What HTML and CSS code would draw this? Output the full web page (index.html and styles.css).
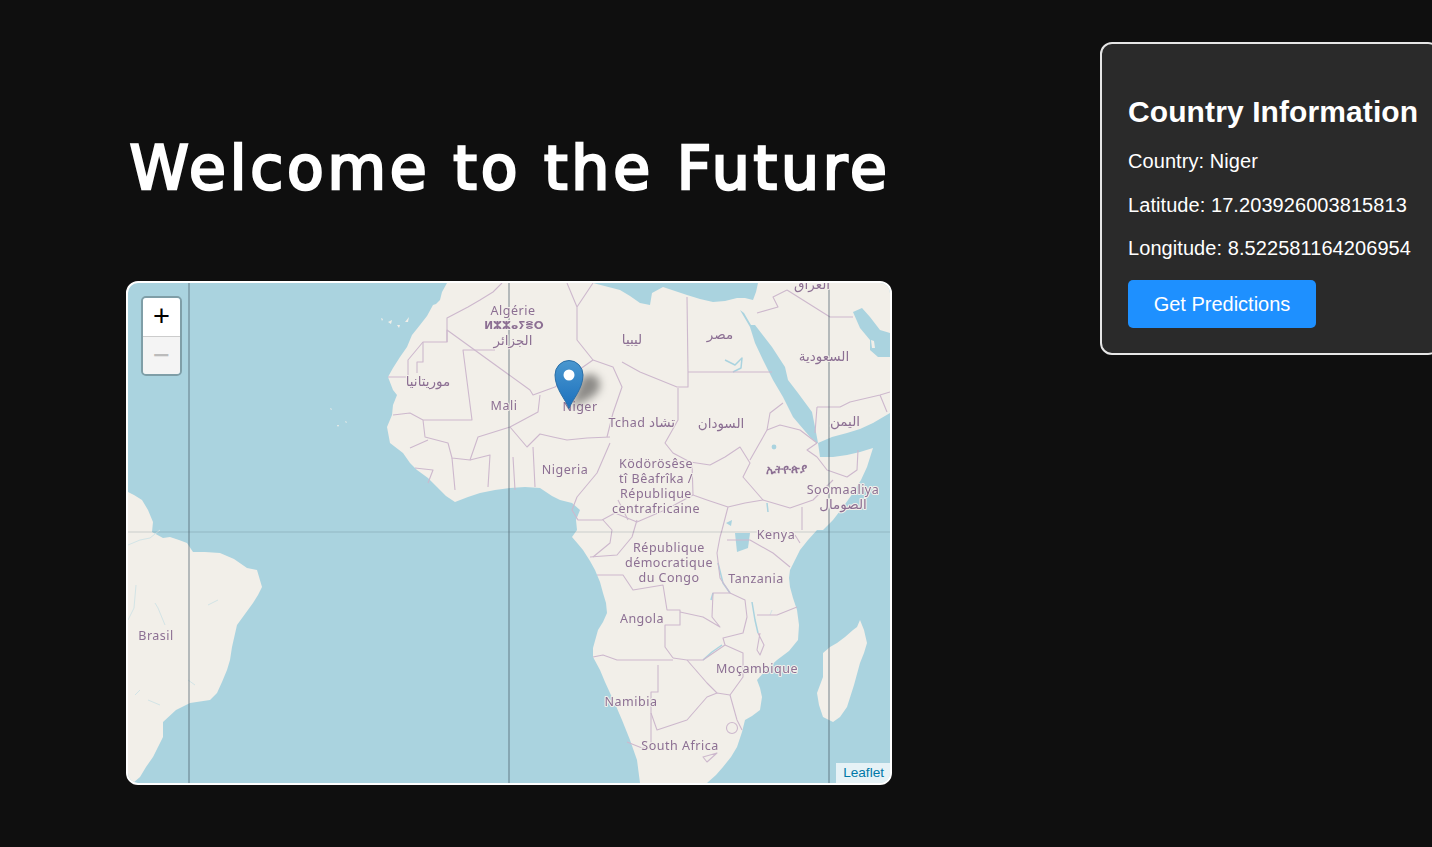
FILE: index.html
```html
<!DOCTYPE html>
<html lang="en">
<head>
<meta charset="utf-8">
<title>Welcome to the Future</title>
<link rel="stylesheet" href="styles.css">
</head>
<body>
<main class="page">
  <section class="left">
    <h1 class="title">Welcome to the Future</h1>
    <div class="map">
      <svg class="tiles" viewBox="128 283 762 500" width="762" height="500">
        <g class="land">
          <path d="M447,283 442,292 440,300 436,304 433,305 427,316 420,325 412,335 407,347 400,357 393,368 388,377 393,390 397,395 393,405 392,415 387,427 390,443 403,453 410,463 417,470 428,478 437,487 446,496 455,502 468,497 480,493 495,490 510,488 525,487 540,488 552,496 560,500 572,503 580,510 576,520 577,530 572,537 578,544 583,550 590,561 595,570 600,582 603,593 606,603 607,613 603,622 598,630 593,648 593,657 600,670 605,682 610,693 616,706 622,720 630,740 637,760 640,783 707,783 716,775 723,767 731,757 737,747 742,732 745,720 752,716 760,710 762,697 760,688 757,680 766,670 777,660 789,651 798,640 799,625 797,610 793,598 790,587 789,578 790,570 795,560 800,550 808,540 817,530 823,530 833,520 843,507 853,493 861,480 867,467 873,448 860,452 847,455 833,457 820,457 818,443 832,437 847,433 860,429 873,423 890,413 890,283 758,283 756,292 753,300 745,298 737,298 725,301 713,302 700,299 687,295 675,291 663,287 652,293 650,305 640,303 630,296 620,290 593,283Z"/>
          <path d="M128,492 134,495 142,500 148,510 153,522 152,532 163,538 170,537 179,540 187,543 193,552 205,552 220,553 234,559 247,568 257,570 262,587 258,595 253,603 245,614 237,625 232,647 230,660 227,670 222,682 217,693 210,700 190,703 176,710 163,722 163,737 158,747 153,757 146,767 140,777 133,783 128,783Z"/>
          <path d="M860,620 864,630 867,643 864,653 860,663 854,685 847,707 840,717 833,722 823,717 819,705 817,693 823,677 823,653 830,647 837,643 845,637 853,630 857,627Z"/>
          <path d="M381,318l2,1-1,2zM388,322l4-2-1,4zM397,325l3,0-1,3zM405,322l4-5 -1,5zM330,408l2,1-1,1zM345,421l2,1-1,1zM337,425l2,0-1,2z"/>
        </g>
        <g class="water">
          <path d="M740,310 750,327 755,343 763,360 773,380 783,397 793,417 810,437 817,443 818,443 815,427 812,412 798,393 788,380 785,367 772,347 755,325 751,325 744,313Z"/>
          <path d="M853,312 862,308 870,317 880,330 890,333 890,357 878,357 870,350 870,340 860,328Z"/>
          <path d="M735,533 750,533 748,548 737,552Z"/>
          <circle cx="774" cy="447" r="2.4"/>
          <path d="M726,523l6-3 -1,6z"/>
        </g>
        <g class="land">
          <path d="M871,340l3,1 1,7-3,0z"/>
        </g>
        <g class="river">
          <path d="M718,563 721,575 723,583 730,593"/>
          <path d="M752,602 755,620 758,633"/>
          <path d="M767,503 768,512"/>
          <path d="M725,360 735,365 742,358 741,368 733,372"/>
          <path d="M703,660 712,652 722,645"/>
          <path d="M713,593 711,600"/>
        </g>
        <g class="stream">
          <path d="M128,545 140,540 150,538 160,530M128,620 134,608 136,585M155,603 158,608 165,625M208,605 218,600M188,680 195,685M135,695 140,690M148,700 160,705"/>
          <path d="M770,615 772,610M652,702 655,700"/>
        </g>
        <g class="border">
          <path d="M447,342V318L468,307 480,300 493,292 502,283"/>
          <path d="M388,377H408L408,360 423,342H447V330L530,390 533,395 555,387 583,367 593,360 613,367 622,387 613,413 607,437"/>
          <path d="M417,373V362H423V342"/>
          <path d="M495,350H463L472,420H423L410,413 393,415M423,420 425,437 448,443 452,458 470,460 478,437 510,427 538,412 540,395"/>
          <path d="M510,427 527,447 540,434 553,437 567,440 587,438 610,437"/>
          <path d="M567,283 577,307V340L593,360M593,283 577,307"/>
          <path d="M533,447 535,487M610,443 597,473 577,497 572,510 578,520H602L615,513 637,522 665,510 693,495"/>
          <path d="M470,460 490,455 488,487M513,457 515,490M428,483 433,470 415,468M452,458 455,490M428,440 410,448"/>
          <path d="M687,297 688,372V387H677L640,372 622,362M688,372H772M678,388V420L665,443 673,453 690,462 710,465 725,457 740,447 750,463 743,477 763,500 745,503 728,507 707,500 693,495"/>
          <path d="M783,403 770,413 767,430 780,425 800,430 817,443 807,450 817,457 827,470 847,477 857,470 858,450"/>
          <path d="M767,430 750,460M763,500 790,508 813,500 833,480M802,507V530"/>
          <path d="M787,290 830,317H853M757,313 778,307 773,297 787,290M817,407 815,433M817,407H840L850,402 880,395 890,392M880,395 887,412"/>
          <path d="M637,520 632,537 617,555 590,557M597,575H623L633,590 663,585 667,610H680V625H665V647L673,658"/>
          <path d="M720,537 717,553 720,578 730,593H713L712,617 720,627 703,617 680,612"/>
          <path d="M730,593 745,600 747,617 743,633 723,638 725,645 703,660H687L673,658"/>
          <path d="M593,657 603,655 617,660H673M658,665V692H651V713L657,730 672,725 687,720 707,697 717,693 730,695 743,677V653L725,645"/>
          <path d="M687,660 707,683 717,693M730,695 737,720 742,730"/>
          <path d="M757,615H777L797,607M750,540 773,553 790,567M727,540H750M760,633 757,650 760,655 764,645 758,633M800,543 795,535"/>
          <path d="M627,742 642,748H651V713"/>
          <circle cx="732" cy="728" r="5.5"/>
          <path d="M703,757 717,753 707,762Z"/>
          <path d="M593,557 610,543 612,530 603,520M618,500 628,520"/>
          <path d="M692,462 693,495M728,507 722,530 720,537"/>
        </g>
        <g class="grid">
          <path class="grid-v" d="M189,283V783M509,283V783M829,283V783"/>
          <path class="grid-h" d="M128,532H890"/>
        </g>
        <g class="labels">
          <text x="513" y="315">Algérie</text>
          <text class="tifinagh" x="514" y="329">ⵍⵣⵣⴰⵢⴻⵔ</text>
          <text class="arabic" x="513" y="345">الجزائر</text>
          <text class="arabic" x="632" y="344">ليبيا</text>
          <text class="arabic" x="720" y="339">مصر</text>
          <text class="arabic" x="824" y="361">السعودية</text>
          <text class="arabic" x="812" y="289">العراق</text>
          <text class="arabic" x="428" y="386">موريتانيا</text>
          <text x="504" y="410">Mali</text>
          <text x="580" y="411">Niger</text>
          <text x="627" y="427">Tchad</text>
          <text class="arabic" x="662" y="427">تشاد</text>
          <text class="arabic" x="721" y="428">السودان</text>
          <text class="arabic" x="845" y="426">اليمن</text>
          <text x="565" y="474">Nigeria</text>
          <text x="656" y="468">Ködörösêse</text>
          <text x="656" y="483">tî Bêafrîka /</text>
          <text x="656" y="498">République</text>
          <text x="656" y="513">centrafricaine</text>
          <text class="ethiopic" x="786" y="473">ኢትዮጵያ</text>
          <text x="843" y="494">Soomaaliya</text>
          <text class="arabic" x="843" y="509">الصومال</text>
          <text x="776" y="539">Kenya</text>
          <text x="669" y="552">République</text>
          <text x="669" y="567">démocratique</text>
          <text x="669" y="582">du Congo</text>
          <text x="756" y="583">Tanzania</text>
          <text x="642" y="623">Angola</text>
          <text x="757" y="673">Moçambique</text>
          <text x="631" y="706">Namibia</text>
          <text x="680" y="750">South Africa</text>
          <text x="156" y="640">Brasil</text>
        </g>
      </svg>
      <svg class="pin" viewBox="0 0 60 52" width="60" height="52">
        <defs>
          <linearGradient id="pinFill" x1="0" y1="0" x2="0" y2="1">
            <stop offset="0" stop-color="#4a97cf"/>
            <stop offset="1" stop-color="#1b70bd"/>
          </linearGradient>
          <filter id="pinBlur" x="-60%" y="-60%" width="220%" height="220%">
            <feGaussianBlur stdDeviation="4.5"/>
          </filter>
        </defs>
        <path class="pin-shadow" d="M16,48 L28,18 C36,12 46,16 46,26 C46,36 32,42 16,48Z" filter="url(#pinBlur)"/>
        <path class="pin-body" d="M15,49.5C12,41 1,30 1,16A14,14.500 0 0 1 29,16C29,30 18,41 15,49.5Z" fill="url(#pinFill)"/>
        <circle class="pin-dot" cx="15" cy="16" r="5.500"/>
      </svg>
      <div class="zoom">
        <a class="zoom-btn">+</a>
        <a class="zoom-btn zoom-off">−</a>
      </div>
      <div class="attribution">Leaflet</div>
    </div>
  </section>
  <aside class="panel">
    <h2 class="panel-title">Country Information</h2>
    <p class="panel-line">Country: Niger</p>
    <p class="panel-line">Latitude: 17.203926003815813</p>
    <p class="panel-line">Longitude: 8.522581164206954</p>
    <button class="predict">Get Predictions</button>
  </aside>
</main>
</body>
</html>
```
FILE: styles.css
```css
html, body {
  margin: 0;
  height: 100%;
  overflow: hidden;
  background: #0f0f0f;
  color: #fff;
  font-family: "Liberation Sans", Arial, sans-serif;
}
.page {
  display: flex;
  align-items: flex-start;
  padding-left: 126px;
}
.left {
  flex: 0 0 766px;
  min-width: 0;
  padding-top: 129px;
}
.title {
  margin: 0 0 70px;
  padding-left: 2px;
  height: 82px;
  line-height: 79px;
  font-family: "DejaVu Sans", sans-serif;
  font-size: 60px;
  font-weight: 400;
  letter-spacing: 3.8px;
  text-align: center;
  white-space: nowrap;
  -webkit-text-stroke: 2.6px #fff;
}
.map {
  position: relative;
  width: 762px;
  height: 500px;
  border: 2px solid #fff;
  border-radius: 12px;
  overflow: hidden;
  background: #aad3df;
}
.tiles {
  display: block;
  filter: blur(0.35px);
}
.land { fill: #f2efe9; }
.water { fill: #aad3df; }
.river {
  fill: none;
  stroke: #aad3df;
  stroke-width: 1.5;
  stroke-linejoin: round;
}
.stream {
  fill: none;
  stroke: #d3e4e6;
  stroke-width: 1;
}
.border {
  fill: none;
  stroke: #cdb8cd;
  stroke-width: 1.1;
  stroke-linejoin: round;
}
.grid { fill: none; }
.grid-v { stroke: rgba(70, 90, 100, 0.5); stroke-width: 1.4; }
.grid-h { stroke: rgba(70, 90, 100, 0.22); stroke-width: 1; }
.labels text {
  font-family: "Noto Sans", "DejaVu Sans", sans-serif;
  font-size: 12.5px;
  letter-spacing: 0.5px;
  text-anchor: middle;
  fill: #8c6f93;
  stroke: #f2efe9;
  stroke-width: 2.2px;
  paint-order: stroke;
  stroke-linejoin: round;
}
.labels .arabic {
  font-family: "DejaVu Sans", sans-serif;
  font-size: 13.5px;
  letter-spacing: 0;
}
.labels .tifinagh {
  font-family: "DejaVu Sans", "Noto Sans", sans-serif;
  font-size: 10.5px;
  letter-spacing: 0;
  font-weight: 700;
}
.labels .ethiopic {
  font-family: "DejaVu Sans", "Noto Sans", sans-serif;
  font-size: 11.5px;
  letter-spacing: 0;
  font-weight: 700;
}
.pin {
  position: absolute;
  left: 426px;
  top: 76px;
}
.pin-shadow { fill: rgba(0, 0, 0, 0.42); }
.pin-body { stroke: #2a6ea6; stroke-width: 1; }
.pin-dot { fill: #fff; }
.zoom {
  position: absolute;
  left: 13px;
  top: 13px;
  width: 37px;
  border: 2px solid rgba(0, 0, 0, 0.25);
  border-radius: 5px;
  overflow: hidden;
  background-clip: padding-box;
}
.zoom-btn {
  display: block;
  height: 38px;
  line-height: 37px;
  text-align: center;
  font-family: "Liberation Sans", Arial, sans-serif;
  font-size: 29px;
  color: #000;
  background: #fff;
}
.zoom-off {
  border-top: 1px solid #ccc;
  height: 37px;
  color: #bbb;
  background: #f4f4f4;
}
.attribution {
  position: absolute;
  right: 0;
  bottom: 0;
  padding: 0 6px 0 7px;
  height: 20px;
  line-height: 20px;
  font-size: 13.6px;
  color: #0078a8;
  background: rgba(255, 255, 255, 0.7);
}
.panel {
  flex: 0 0 auto;
  margin: 42px 0 0 208px;
  padding: 26px 40px 25px 26px;
  width: 340px;
  box-sizing: border-box;
  background: #2a2a2a;
  border: 2px solid #e6e6e6;
  border-radius: 12px;
}
.panel-title {
  margin: 25px 0 21px;
  font-size: 30px;
  line-height: 34px;
  font-weight: 700;
  letter-spacing: 0.1px;
  white-space: nowrap;
}
.panel-line {
  margin: 0 0 20.7px;
  font-size: 20px;
  line-height: 23px;
  letter-spacing: 0.07px;
  white-space: nowrap;
}
.predict {
  display: block;
  width: 188px;
  height: 48px;
  margin-top: -1px;
  padding: 0;
  border: 0;
  border-radius: 5px;
  background: #1e90ff;
  color: #fff;
  font-family: inherit;
  font-size: 20px;
}
```
